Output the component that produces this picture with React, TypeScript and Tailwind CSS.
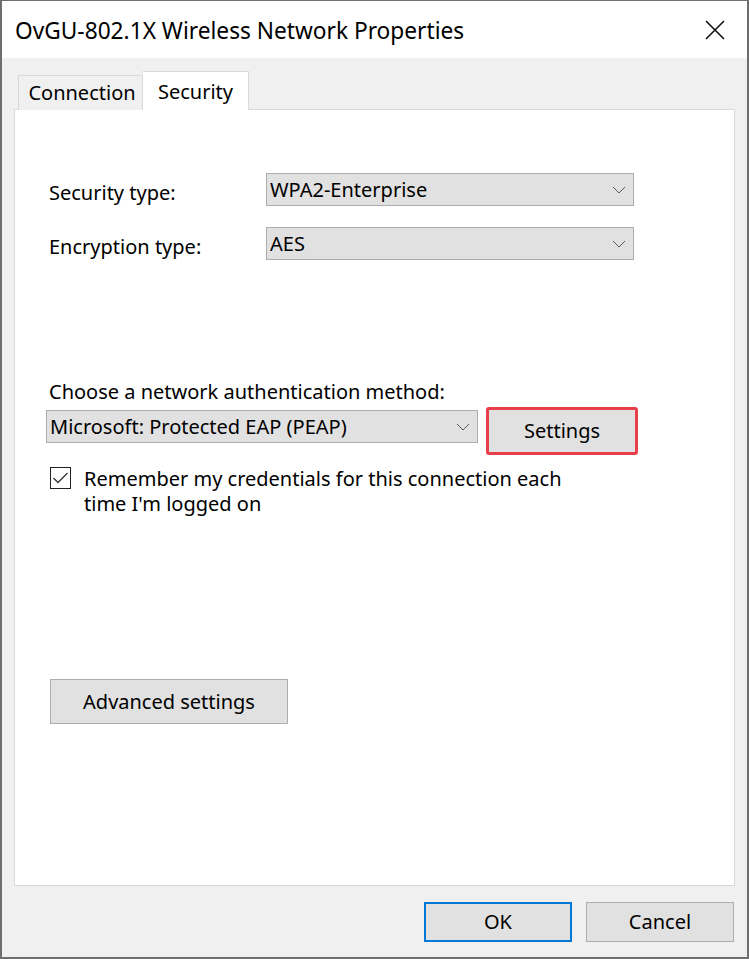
const font = { fontFamily: '"Noto Sans", "Open Sans", sans-serif' };

const Chevron = () => (
  <svg width="14" height="8" viewBox="0 0 14 8" className="shrink-0">
    <path d="M1 1 L7 7 L13 1" fill="none" stroke="#5a5a5a" strokeWidth="1" />
  </svg>
);

const Select = ({ value, className }: { value: string; className: string }) => (
  <div
    className={`flex items-center justify-between h-[33px] pl-[3px] pr-[7px] bg-[#e1e1e1] border border-[#adadad] text-[20px] text-black ${className}`}
  >
    <span className="leading-none">{value}</span>
    <Chevron />
  </div>
);

export default function App() {
  return (
    <div
      style={font}
      className="w-[749px] h-[959px] flex flex-col border-t border-l-2 border-r-2 border-b-2 border-[#6e6e6e] bg-[#f0f0f0] text-black"
    >
      {/* title bar */}
      <div className="h-[57px] shrink-0 bg-white flex items-center justify-between pl-[13px] pr-[22px]">
        <span className="text-[22.7px] leading-none pt-[3px]">OvGU-802.1X Wireless Network Properties</span>
        <svg width="20" height="20" viewBox="0 0 20 20">
          <path d="M1 1 L19 19 M19 1 L1 19" stroke="#111" strokeWidth="1.6" />
        </svg>
      </div>

      <div className="flex flex-col px-[12px] pt-[13px]">
        {/* tabs */}
        <div className="flex items-end pl-[4px] h-[39px] relative z-10 -mb-px">
          <div className="w-[125px] h-[35px] flex items-center justify-center pl-[3px] border border-b-0 border-[#d9d9d9] bg-[#f0f0f0] text-[20px]">
            Connection
          </div>
          <div className="w-[106px] h-[39px] flex items-start pt-[5px] justify-center border border-b-0 border-l-0 border-[#d9d9d9] bg-white text-[20px]">
            Security
          </div>
        </div>

        {/* panel */}
        <div className="h-[777px] bg-white border border-[#d9d9d9] flex flex-col pt-[63px] pl-[34px]">
          <div className="flex items-center h-[33px]">
            <span className="w-[217px] text-[20px] translate-y-[3px]">Security type:</span>
            <Select value="WPA2-Enterprise" className="w-[368px]" />
          </div>
          <div className="flex items-center h-[33px] mt-[21px]">
            <span className="w-[217px] text-[20px] translate-y-[3px]">Encryption type:</span>
            <Select value="AES" className="w-[368px]" />
          </div>

          <div className="mt-[122px] text-[20px] leading-none">Choose a network authentication method:</div>
          <div className="flex items-start mt-[5px] -ml-[3px]">
            <Select value="Microsoft: Protected EAP (PEAP)" className="w-[432px] mt-[3px]" />
            <button className="ml-[8px] w-[152px] h-[48px] rounded-[3px] border-[3px] border-[#e8404a] bg-[#e1e1e1] text-[20px] flex items-center justify-center">
              Settings
            </button>
          </div>

          <div className="flex items-start mt-[12px] pl-[1px]">
            <div className="w-[21px] h-[22px] border-[1.5px] border-[#222] flex items-center justify-center shrink-0">
              <svg width="17" height="14" viewBox="0 0 17 14">
                <path d="M1.5 7 L6 11.5 L15.5 2" fill="none" stroke="#333" strokeWidth="1.3" />
              </svg>
            </div>
            <div className="ml-[13px] text-[20px] leading-[25px] -mt-[1px]">
              Remember my credentials for this connection each
              <br />
              time I'm logged on
            </div>
          </div>

          <button className="mt-[163px] ml-[1px] w-[238px] h-[45px] bg-[#e1e1e1] border border-[#adadad] text-[20px] flex items-center justify-center">
            Advanced settings
          </button>
        </div>

        {/* bottom buttons */}
        <div className="flex justify-end gap-[14px] mt-[16px] pr-[1px]">
          <button className="w-[148px] h-[40px] bg-[#e1e1e1] border-2 border-[#0078d7] text-[20px] flex items-center justify-center">
            OK
          </button>
          <button className="w-[148px] h-[40px] bg-[#e1e1e1] border border-[#adadad] text-[20px] flex items-center justify-center">
            Cancel
          </button>
        </div>
      </div>
    </div>
  );
}
